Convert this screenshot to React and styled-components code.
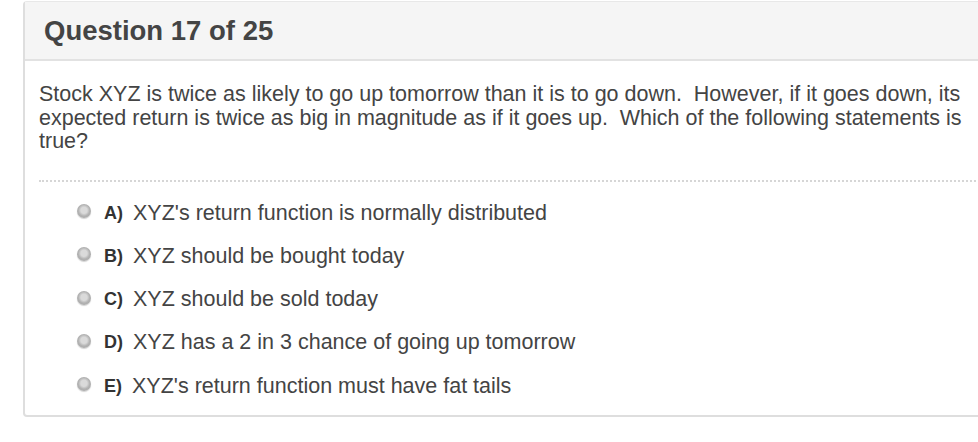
import React from 'react'
import styled, { createGlobalStyle } from 'styled-components'

const GlobalStyle = createGlobalStyle`
html, body {
  margin: 0;
  padding: 0;
  background: #fff;
  overflow: hidden;
  font-family: "Liberation Sans", Arial, sans-serif;
}
`

const Card = styled.div`
margin: 1px 0 0 23px;
width: 990px;
border: 2px solid #dedede;
border-top: 1px solid #e8e8e8;
border-radius: 4px;
background: #fff;
`

const Header = styled.div`
height: 57px;
display: flex;
align-items: center;
padding-left: 19px;
background: #f5f5f5;
border-bottom: 2px solid #e2e2e2;
`

const Title = styled.h2`
margin: 0;
font-size: 27.5px;
font-weight: bold;
color: #444;
`

const Body = styled.div`
padding: 22px 0 18px 14px;
`

const Prompt = styled.p`
margin: 0;
width: 935px;
font-size: 21.5px;
line-height: 23.5px;
color: #444;
`

const Divider = styled.div`
margin: 26px 0 21px;
border-top: 2px dotted #d6d6d6;
`

const Options = styled.ul`
list-style: none;
margin: 0;
padding: 0 0 0 38px;
display: flex;
flex-direction: column;
gap: 22.3px;
`

const Option = styled.li`
display: flex;
align-items: center;
height: 21px;
font-size: 21.5px;
color: #444;
`

const Radio = styled.span`
box-sizing: border-box;
width: 14px;
height: 14px;
border-radius: 50%;
margin-top: -4px;
margin-right: 13px;
background: radial-gradient(circle at 50% 45%, #dadada 0 30%, #b2b2b2 55%, #a5a5a5 100%);
box-shadow: 0 1px 1px rgba(0, 0, 0, 0.18);
`

const Letter = styled.b`
font-size: 18px;
margin-right: 10px;
color: #333;
`

const options = [
  ['A', "XYZ's return function is normally distributed"],
  ['B', 'XYZ should be bought today'],
  ['C', 'XYZ should be sold today'],
  ['D', 'XYZ has a 2 in 3 chance of going up tomorrow'],
  ['E', "XYZ's return function must have fat tails"],
]

const App = () => {
  return (
    <>
      <GlobalStyle />
      <Card>
        <Header>
          <Title>Question 17 of 25</Title>
        </Header>
        <Body>
          <Prompt>
            Stock XYZ is twice as likely to go up tomorrow than it is to go down.&nbsp; However, if it goes down, its
            expected return is twice as big in magnitude as if it goes up.&nbsp; Which of the following statements is
            true?
          </Prompt>
          <Divider />
          <Options>
            {options.map(([letter, text]) => (
              <Option key={letter}>
                <Radio />
                <Letter>{letter})</Letter>
                {text}
              </Option>
            ))}
          </Options>
        </Body>
      </Card>
    </>
  )
}

export default App
